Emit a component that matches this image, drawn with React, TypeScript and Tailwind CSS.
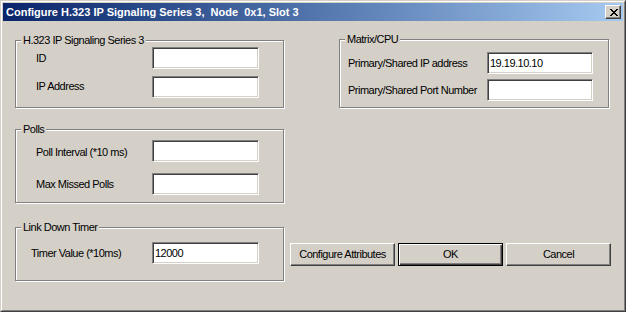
import React from "react";

const txt = "text-[11px] tracking-[-0.5px] leading-[13px] text-black";

function Field({ value = "", w = "w-[107px]" }: { value?: string; w?: string }) {
  return (
    <div
      className={`${w} h-[22px] shrink-0 bg-white border border-t-[#808080] border-l-[#808080] border-b-white border-r-white shadow-[inset_1px_1px_0_#404040,inset_-1px_-1px_0_#d4d0c8] pl-[2px] flex items-center ${txt}`}
    >
      {value}
    </div>
  );
}

function Group({
  title,
  className,
  children,
}: {
  title: string;
  className: string;
  children: React.ReactNode;
}) {
  return (
    <div
      className={`relative border border-[#808080] shadow-[inset_1px_1px_0_#fff,1px_1px_0_#fff] flex flex-col ${className}`}
    >
      <span className={`absolute left-[5px] top-[-7px] px-[2px] bg-[#d4d0c8] whitespace-nowrap ${txt}`}>{title}</span>
      {children}
    </div>
  );
}

function Row({
  label,
  labelW,
  labelCls = "",
  value,
  fieldW,
}: {
  label: string;
  labelW: string;
  labelCls?: string;
  value?: string;
  fieldW?: string;
}) {
  return (
    <div className="flex items-center">
      <span className={`${labelW} shrink-0 whitespace-nowrap ${txt} ${labelCls}`}>{label}</span>
      <Field value={value} w={fieldW} />
    </div>
  );
}

function Button({ label, def = false }: { label: string; def?: boolean }) {
  const cls = def
    ? "border border-black shadow-[inset_1px_1px_0_#fff,inset_-1px_-1px_0_#404040,inset_-2px_-2px_0_#808080]"
    : "border border-t-white border-l-white border-b-[#404040] border-r-[#404040] shadow-[inset_-1px_-1px_0_#808080]";
  return (
    <div className={`w-[105px] h-[23px] bg-[#d4d0c8] flex items-center justify-center ${cls} ${txt}`}>{label}</div>
  );
}

function CloseX() {
  const rows: [number, number][][] = [
    [[0, 2], [6, 2]],
    [[1, 2], [5, 2]],
    [[2, 4]],
    [[3, 2]],
    [[2, 4]],
    [[1, 2], [5, 2]],
    [[0, 2], [6, 2]],
  ];
  return (
    <svg width="8" height="7" viewBox="0 0 8 7" shapeRendering="crispEdges">
      {rows.map((r, y) => r.map(([x, w], i) => <rect key={`${y}-${i}`} x={x} y={y} width={w} height={1} fill="#000" />))}
    </svg>
  );
}

export default function App() {
  return (
    <div className="w-[626px] h-[312px] bg-[#d4d0c8] border border-t-[#d4d0c8] border-l-[#d4d0c8] border-b-[#404040] border-r-[#404040] font-['Liberation_Sans',Arial,sans-serif]">
      <div className="h-full border border-t-white border-l-white border-b-[#808080] border-r-[#808080] p-[1px] flex flex-col">
        {/* Title bar */}
        <div className="h-[18px] shrink-0 bg-linear-to-r from-[#0a246a] to-[#a6caf0] flex items-center justify-between pl-[3px] pr-[2px]">
          <span className="text-[11px] font-bold text-white whitespace-pre leading-[13px]">
            {"Configure H.323 IP Signaling Series 3,  Node  0x1, Slot 3"}
          </span>
          <div className="w-[16px] h-[14px] bg-[#d4d0c8] border border-t-white border-l-white border-b-[#404040] border-r-[#404040] shadow-[inset_-1px_-1px_0_#808080] flex items-center justify-center pl-[1px] pt-[1px]">
            <CloseX />
          </div>
        </div>

        {/* Body */}
        <div className="flex pl-[12px] pt-[19px] gap-[6px]">
          {/* Left column */}
          <div className="w-[269px] flex flex-col">
            <Group title="H.323 IP Signaling Series 3" className="pt-[6px] pb-[9px] gap-[7px] pl-[20px]">
              <Row label="ID" labelW="w-[116px]" />
              <Row label="IP Address" labelW="w-[116px]" labelCls="mb-[2px]" />
            </Group>
            <Group title="Polls" className="mt-[21px] pt-[10px] pb-[7px] gap-[11px] pl-[20px]">
              <Row label="Poll Interval (*10 ms)" labelW="w-[116px]" labelCls="mt-[2px]" />
              <Row label="Max Missed Polls" labelW="w-[116px]" />
            </Group>
            <Group title="Link Down Timer" className="mt-[24px] pt-[14px] pb-[16px] pl-[15px]">
              <Row label="Timer Value (*10ms)" labelW="w-[121px]" value="12000" />
            </Group>
          </div>

          {/* Right column */}
          <div className="w-[321px] flex flex-col">
            <Group title="Matrix/CPU" className="ml-[49px] w-[270px] mt-[-1px] pt-[12px] pb-[6px] gap-[5px] pl-[8px]">
              <Row label="Primary/Shared IP address" labelW="w-[139px]" value="19.19.10.10" fieldW="w-[106px]" />
              <Row label="Primary/Shared Port Number" labelW="w-[139px]" fieldW="w-[106px]" />
            </Group>
            <div className="mt-[135px] flex gap-[3px]">
              <Button label="Configure Attributes" />
              <Button label="OK" def />
              <Button label="Cancel" />
            </div>
          </div>
        </div>
      </div>
    </div>
  );
}
